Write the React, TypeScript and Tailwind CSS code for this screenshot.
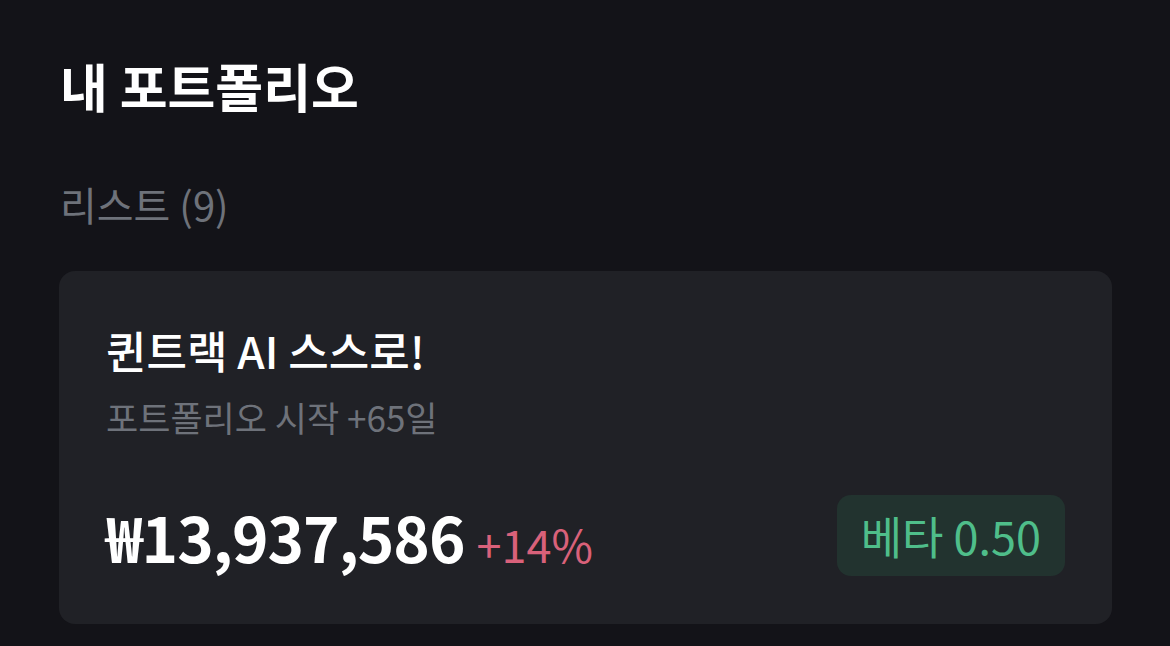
export default function App() {
  return (
    <div
      className="min-h-[646px] w-full bg-[#131318] pl-[59px] pr-[58px] pt-[54px] text-white"
      style={{ fontFamily: '"Noto Sans CJK KR", "Noto Sans", sans-serif' }}
    >
      <h1 className="pl-[1px] text-[52px] font-bold leading-[64px]">내 포트폴리오</h1>

      <p className="mt-[61px] pl-[1px] text-[40px] leading-[50px] text-[#6e727a]">리스트 (9)</p>

      <div className="mt-[42px] rounded-[16px] bg-[#202126] px-[47px] pt-[51px] pb-[48px]">
        <h2 className="text-[44px] font-medium leading-[56px]">퀸트랙 AI 스스로!</h2>
        <p className="mt-[17px] text-[35px] leading-[44px] text-[#6e727a]">포트폴리오 시작 +65일</p>

        <div className="mt-[56px] flex items-center justify-between">
          <div className="flex items-baseline gap-[12px]">
            <span className="text-[62px] font-bold leading-[80px] tracking-[-1px]">₩13,937,586</span>
            <span className="text-[45px] leading-[60px] text-[#d9617a]">+14%</span>
          </div>
          <div className="flex h-[81px] items-center rounded-[14px] bg-[#22332f] px-[24px]">
            <span className="text-[45px] leading-[56px] text-[#4fbe8a]">베타 0.50</span>
          </div>
        </div>
      </div>
    </div>
  );
}
